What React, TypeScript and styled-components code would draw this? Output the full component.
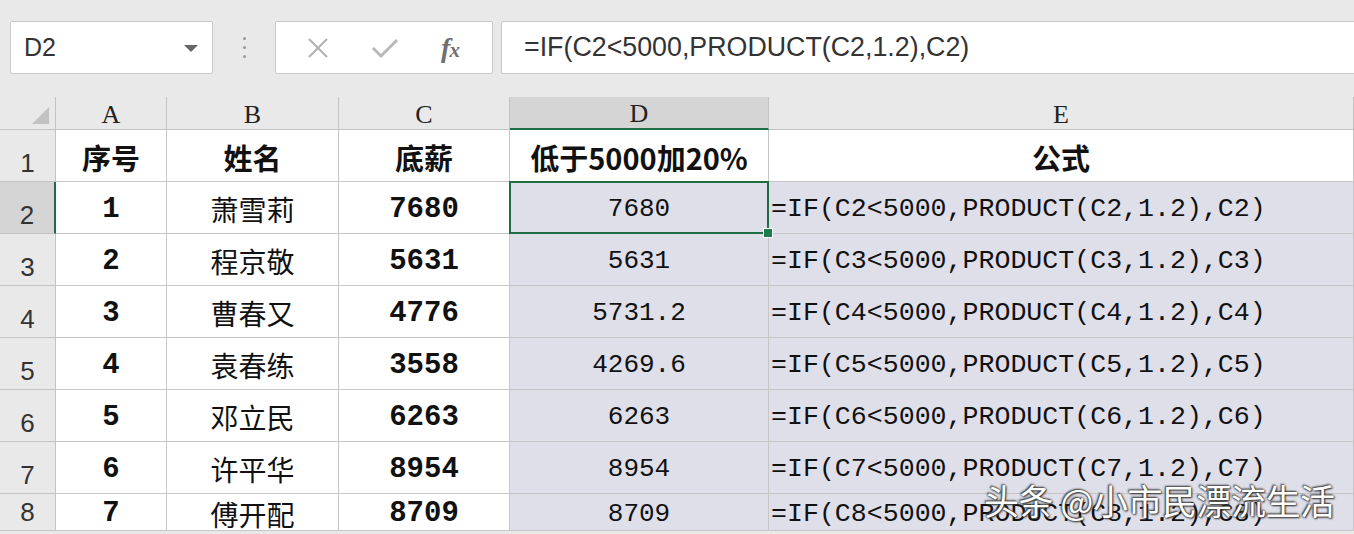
import React from "react";
import styled, { createGlobalStyle } from "styled-components";

const Global = createGlobalStyle`
  html, body { margin: 0; padding: 0; background: #e9e9e9; overflow: hidden; }
  #root { width: 1354px; height: 534px; overflow: hidden; position: relative; }
`;

const Page = styled.div`
  width: 1354px;
  height: 534px;
  display: flex;
  flex-direction: column;
  background: #e9e9e9;
  position: relative;
  overflow: hidden;
`;

const Toolbar = styled.div`
  height: 97px;
  display: flex;
  align-items: flex-start;
  padding: 21px 0 0 10px;
  box-sizing: border-box;
`;

const Box = styled.div<{ $w: number }>`
  width: ${(p) => p.$w}px;
  height: 53px;
  flex: none;
  background: #fff;
  border: 1px solid #c9c9c9;
  border-radius: 2px;
  box-sizing: border-box;
  display: flex;
  align-items: center;
`;

const NameBox = styled(Box)`
  padding: 0 14px 0 13px;
  justify-content: space-between;
  font-family: "Liberation Sans", Arial, sans-serif;
  font-size: 25px;
  color: #333;
`;

const Caret = styled.span`
  width: 0;
  height: 0;
  border-left: 7px solid transparent;
  border-right: 7px solid transparent;
  border-top: 7px solid #666;
  margin-top: 2px;
`;

const Dots = styled.div`
  width: 62px;
  height: 53px;
  display: flex;
  flex-direction: column;
  align-items: center;
  justify-content: center;
  gap: 6px;
  span { width: 3px; height: 3px; border-radius: 50%; background: #9a9a9a; }
`;

const FuncBox = styled(Box)`
  justify-content: space-around;
  padding: 0 12px 0 10px;
  margin-right: 8px;
`;

const Fx = styled.span`
  font-family: "Liberation Serif", "Times New Roman", serif;
  font-style: italic;
  font-weight: bold;
  font-size: 28px;
  color: #707070;
  letter-spacing: -1px;
  line-height: 1;
  span { font-size: 21px; }
`;

const FormulaBox = styled(Box)`
  flex: 1;
  margin-right: -10px;
  padding-left: 22px;
  font-family: "Liberation Sans", Arial, sans-serif;
  font-size: 26.8px;
  color: #333;
`;

const Grid = styled.div`
  display: grid;
  grid-template-columns: 56px 111px 172px 171px 259px 585px;
  grid-template-rows: 33px repeat(7, 52px) 37px;
  background: #fff;
`;

const Corner = styled.div`
  background: #e9e9e9;
  border-right: 1px solid #c3c3c3;
  border-bottom: 1px solid #c3c3c3;
  box-sizing: border-box;
  position: relative;
  &::after {
    content: "";
    position: absolute;
    right: 6px;
    bottom: 5px;
    width: 0;
    height: 0;
    border-left: 17px solid transparent;
    border-bottom: 17px solid #c2c2c2;
  }
`;

const ColHead = styled.div<{ $sel?: boolean }>`
  background: ${(p) => (p.$sel ? "#d5d5d5" : "#e9e9e9")};
  border-right: 1px solid #c3c3c3;
  border-bottom: ${(p) => (p.$sel ? "2px solid #1f6e43" : "1px solid #c3c3c3")};
  box-sizing: border-box;
  display: flex;
  align-items: center;
  justify-content: center;
  font-family: "Liberation Serif", "Times New Roman", serif;
  font-size: 26px;
  color: #222;
  padding-top: 3px;
`;

const RowHead = styled.div<{ $sel?: boolean }>`
  background: ${(p) => (p.$sel ? "#d5d5d5" : "#e9e9e9")};
  border-right: ${(p) => (p.$sel ? "2px solid #1f6e43" : "1px solid #c3c3c3")};
  border-bottom: 1px solid #c3c3c3;
  box-sizing: border-box;
  display: flex;
  align-items: flex-end;
  justify-content: center;
  padding-bottom: 2px;
  font-family: "Liberation Sans", Arial, sans-serif;
  font-size: 26px;
  color: #333;
`;

type Kind = "head" | "idx" | "name" | "salary" | "value" | "formula";

const fontFor = (k: Kind) => {
  switch (k) {
    case "head":
      return `font-family: "Noto Sans CJK SC", sans-serif; font-weight: 700; font-size: 29px;`;
    case "idx":
    case "salary":
      return `font-family: "Liberation Mono", "Courier New", monospace; font-weight: 700; font-size: 29px;`;
    case "name":
      return `font-family: "Noto Sans CJK SC", sans-serif; font-weight: 400; font-size: 28px;`;
    case "value":
      return `font-family: "Liberation Mono", "Courier New", monospace; font-size: 26px;`;
    case "formula":
      return `font-family: "Liberation Mono", "Courier New", monospace; font-size: 26.6px;`;
  }
};

const Cell = styled.div<{ $kind: Kind; $tint?: boolean }>`
  background: ${(p) => (p.$tint ? "#dfdfea" : "#fff")};
  border-right: 1px solid #c6c6c6;
  border-bottom: 1px solid #c6c6c6;
  box-sizing: border-box;
  display: flex;
  align-items: center;
  justify-content: ${(p) => (p.$kind === "formula" ? "flex-start" : "center")};
  padding-left: ${(p) => (p.$kind === "formula" ? "2px" : "0")};
  padding-top: 3px;
  color: #111;
  white-space: nowrap;
  overflow: visible;
  position: relative;
  ${(p) => fontFor(p.$kind)}
`;

const Selection = styled.div`
  position: absolute;
  z-index: 3;
  left: -1px;
  top: -1px;
  right: -1px;
  bottom: -1px;
  border: 2px solid #1f6e43;
  pointer-events: none;
  &::after {
    content: "";
    position: absolute;
    right: -6px;
    bottom: -6px;
    width: 8px;
    height: 8px;
    background: #1f7a49;
    border: 1px solid #fff;
  }
`;

const Watermark = styled.div`
  position: absolute;
  z-index: 4;
  left: 984px;
  top: 474px;
  font-family: "Noto Sans CJK SC", sans-serif;
  font-size: 35px;
  color: #fff;
  letter-spacing: -0.5px;
  text-shadow: 0 0 2px #333, 1px 1px 2px #333, -1px -1px 2px #444;
  white-space: nowrap;
`;

const data = [
  ["1", "萧雪莉", "7680", "7680"],
  ["2", "程京敬", "5631", "5631"],
  ["3", "曹春又", "4776", "5731.2"],
  ["4", "袁春练", "3558", "4269.6"],
  ["5", "邓立民", "6263", "6263"],
  ["6", "许平华", "8954", "8954"],
  ["7", "傅开配", "8709", "8709"],
];

const X = () => (
  <svg width="22" height="22" viewBox="0 0 22 22">
    <path d="M2 2 L20 20 M20 2 L2 20" stroke="#b0b0b0" strokeWidth="2" fill="none" />
  </svg>
);

const Check = () => (
  <svg width="28" height="22" viewBox="0 0 28 22">
    <path d="M2 11 L10 19 L26 3" stroke="#b8b8b8" strokeWidth="3" fill="none" />
  </svg>
);

export default function App() {
  return (
    <Page>
      <Global />
      <Toolbar>
        <NameBox $w={203}>
          <span>D2</span>
          <Caret />
        </NameBox>
        <Dots>
          <span />
          <span />
          <span />
        </Dots>
        <FuncBox $w={218}>
          <X />
          <Check />
          <Fx>
            f<span>x</span>
          </Fx>
        </FuncBox>
        <FormulaBox $w={860}>=IF(C2&lt;5000,PRODUCT(C2,1.2),C2)</FormulaBox>
      </Toolbar>
      <Grid>
        <Corner />
        <ColHead>A</ColHead>
        <ColHead>B</ColHead>
        <ColHead>C</ColHead>
        <ColHead $sel>D</ColHead>
        <ColHead>E</ColHead>

        <RowHead>1</RowHead>
        <Cell $kind="head">序号</Cell>
        <Cell $kind="head">姓名</Cell>
        <Cell $kind="head">底薪</Cell>
        <Cell $kind="head">低于5000加20%</Cell>
        <Cell $kind="head">公式</Cell>

        {data.map((r, i) => {
          const n = i + 2;
          return (
            <React.Fragment key={n}>
              <RowHead $sel={n === 2}>{n}</RowHead>
              <Cell $kind="idx">{r[0]}</Cell>
              <Cell $kind="name">{r[1]}</Cell>
              <Cell $kind="salary">{r[2]}</Cell>
              <Cell $kind="value" $tint>
                {r[3]}
                {n === 2 && <Selection />}
              </Cell>
              <Cell $kind="formula" $tint>
                {`=IF(C${n}<5000,PRODUCT(C${n},1.2),C${n})`}
              </Cell>
            </React.Fragment>
          );
        })}
      </Grid>
      <Watermark>头条 @小市民漂流生活</Watermark>
    </Page>
  );
}
